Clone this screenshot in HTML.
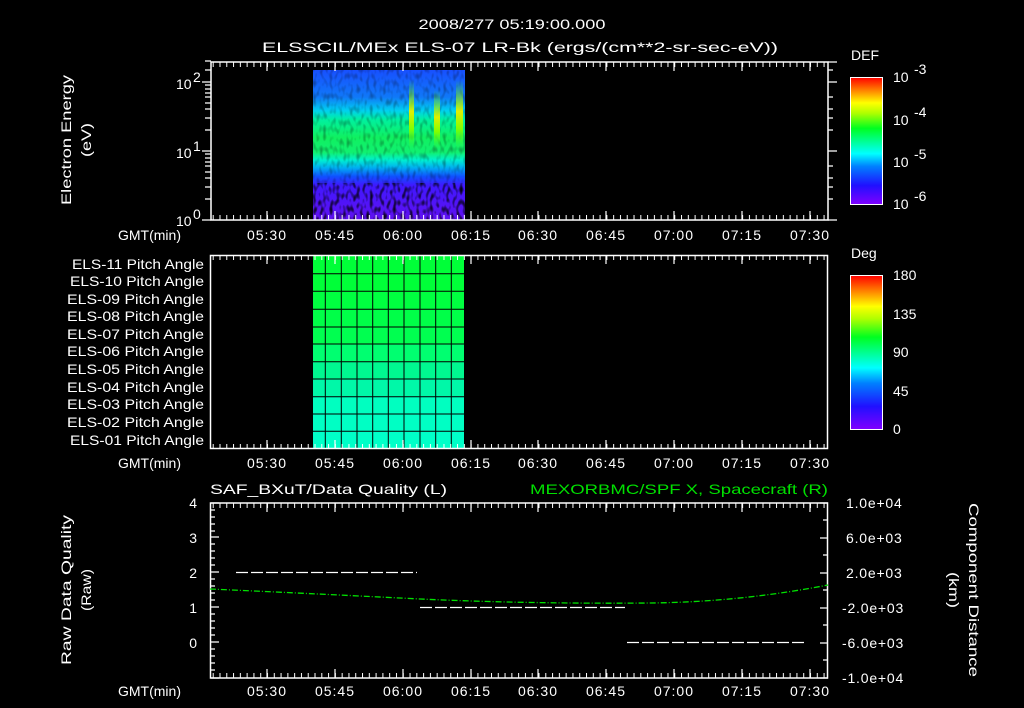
<!DOCTYPE html>
<html><head><meta charset="utf-8"><style>
html,body{margin:0;padding:0;background:#000;width:1024px;height:708px;overflow:hidden}
svg{display:block}
text{font-family:"Liberation Sans",sans-serif;fill:#fff;font-size:14px}
</style></head><body>
<svg width="1024" height="708" viewBox="0 0 1024 708">
<defs>
<linearGradient id="rb" x1="0" y1="1" x2="0" y2="0">
<stop offset="0" stop-color="#8000ff"/><stop offset="0.15" stop-color="#2010ff"/>
<stop offset="0.3" stop-color="#0080ff"/><stop offset="0.4" stop-color="#00ffff"/>
<stop offset="0.6" stop-color="#00ff20"/><stop offset="0.72" stop-color="#b0ff00"/>
<stop offset="0.8" stop-color="#ffff00"/><stop offset="0.9" stop-color="#ff8000"/>
<stop offset="1" stop-color="#ff0000"/></linearGradient>
<linearGradient id="sp" x1="0" y1="0" x2="0" y2="1">
<stop offset="0" stop-color="#1850ff"/><stop offset="0.18" stop-color="#1078f8"/>
<stop offset="0.27" stop-color="#00d0f0"/><stop offset="0.33" stop-color="#00f0a0"/>
<stop offset="0.45" stop-color="#10f060"/><stop offset="0.55" stop-color="#10f070"/>
<stop offset="0.6" stop-color="#00f0d0"/><stop offset="0.65" stop-color="#00b0f0"/>
<stop offset="0.71" stop-color="#1050ff"/><stop offset="0.77" stop-color="#4018ff"/>
<stop offset="1" stop-color="#6010f0"/></linearGradient>
<filter id="nz" x="0" y="0" width="1" height="1"><feTurbulence type="fractalNoise" baseFrequency="0.3 0.15" numOctaves="1" seed="3"/><feColorMatrix type="matrix" values="0 0 0 0 0  0 0 0 0 0  0 0 0 0 0  0 0 0 -3 1.6"/><feComposite in2="SourceGraphic" operator="in"/></filter>
<pattern id="tk" patternUnits="userSpaceOnUse" x="267" y="0" width="6.7875" height="708"><line x1="0.5" y1="0" x2="0.5" y2="708" stroke="#fff"/></pattern>
<linearGradient id="sk" x1="0" y1="0" x2="0" y2="1"><stop offset="0" stop-color="#40ff00" stop-opacity="0"/><stop offset="0.45" stop-color="#e0f000"/><stop offset="0.7" stop-color="#80ff00"/><stop offset="1" stop-color="#20ff40" stop-opacity="0"/></linearGradient>
</defs>

<text x="512" y="29" text-anchor="middle" font-size="16" textLength="187" lengthAdjust="spacingAndGlyphs">2008/277 05:19:00.000</text>
<text x="262" y="52" font-size="16" textLength="516" lengthAdjust="spacingAndGlyphs">ELSSCIL/MEx ELS-07 LR-Bk  (ergs/(cm**2-sr-sec-eV))</text>

<!-- Panel 1 -->
<rect x="313" y="70" width="152" height="150" fill="url(#sp)"/>
<rect x="313" y="70" width="152" height="150" fill="#000" filter="url(#nz)" opacity="0.3"/>
<rect x="313" y="183" width="152" height="37" fill="#000" filter="url(#nz)" opacity="0.85"/>
<rect x="409" y="80" width="5" height="70" fill="url(#sk)"/>
<rect x="434" y="90" width="6" height="60" fill="url(#sk)"/>
<rect x="456" y="80" width="7" height="70" fill="url(#sk)"/>
<rect x="211" y="62" width="617" height="158" fill="none" stroke="#fff" stroke-width="1.5"/>
<rect x="211" y="62" width="617" height="5" fill="url(#tk)"/>
<rect x="211" y="215" width="617" height="5" fill="url(#tk)"/>
<g stroke="#fff" stroke-width="1.2">
<path d="M267 62v9M335 62v9M403 62v9M471 62v9M538 62v9M606 62v9M674 62v9M742 62v9M810 62v9"/>
<path d="M267 220v-9M335 220v-9M403 220v-9M471 220v-9M538 220v-9M606 220v-9M674 220v-9M742 220v-9M810 220v-9"/>
<path d="M202 82h9M202 151h9M202 220h9M205 199h6M205 187h6M205 178h6M205 172h6M205 166h6M205 162h6M205 158h6M205 154h6M205 130h6M205 118h6M205 109h6M205 103h6M205 97h6M205 93h6M205 89h6M205 85h6M205 61h6M205 70h6"/>
<path d="M837 82h-9M837 151h-9M837 220h-9M833 199h-5M833 187h-5M833 178h-5M833 166h-5M833 130h-5M833 118h-5M833 109h-5M833 97h-5M833 70h-5M837 62h-9"/>
</g>
<text x="176" y="89">10</text><text x="193" y="82" font-size="10">2</text>
<text x="176" y="158">10</text><text x="193" y="151" font-size="10">1</text>
<text x="176" y="226">10</text><text x="193" y="219" font-size="10">0</text>
<g transform="translate(71,140) rotate(-90)"><text text-anchor="middle" font-size="15" textLength="130" lengthAdjust="spacingAndGlyphs">Electron Energy</text></g>
<g transform="translate(91,140) rotate(-90)"><text text-anchor="middle" font-size="15" textLength="34" lengthAdjust="spacingAndGlyphs">(eV)</text></g>
<text x="118" y="240" textLength="63" lengthAdjust="spacingAndGlyphs">GMT(min)</text>
<g text-anchor="middle" letter-spacing="1"><text x="267" y="240">05:30</text><text x="335" y="240">05:45</text><text x="403" y="240">06:00</text><text x="471" y="240">06:15</text><text x="538" y="240">06:30</text><text x="606" y="240">06:45</text><text x="674" y="240">07:00</text><text x="742" y="240">07:15</text><text x="810" y="240">07:30</text></g>
<text x="851" y="60" font-size="16">DEF</text>
<rect x="850.5" y="77.5" width="32" height="127" fill="url(#rb)" stroke="#fff"/>
<text x="893" y="82" font-size="17">10</text><text x="914" y="74" font-size="11">-3</text>
<text x="893" y="125" font-size="17">10</text><text x="914" y="117" font-size="11">-4</text>
<text x="893" y="167" font-size="17">10</text><text x="914" y="159" font-size="11">-5</text>
<text x="893" y="209" font-size="17">10</text><text x="914" y="201" font-size="11">-6</text>

<!-- Panel 2 -->
<g>
<rect x="313" y="255" width="151" height="18.7" fill="#00ff38"/>
<rect x="313" y="273.7" width="151" height="17.6" fill="#00ff38"/>
<rect x="313" y="291.3" width="151" height="18" fill="#00ff40"/>
<rect x="313" y="309.3" width="151" height="17.7" fill="#00ff48"/>
<rect x="313" y="327" width="151" height="17" fill="#00ff50"/>
<rect x="313" y="344" width="151" height="17.7" fill="#00ff70"/>
<rect x="313" y="361.7" width="151" height="17.3" fill="#00f890"/>
<rect x="313" y="379" width="151" height="17.7" fill="#00f8a8"/>
<rect x="313" y="396.7" width="151" height="17.3" fill="#00ffc0"/>
<rect x="313" y="414" width="151" height="17.3" fill="#00ffc4"/>
<rect x="313" y="431.3" width="151" height="17.4" fill="#00ffc8"/>
</g>
<g stroke="#000" stroke-width="1">
<path d="M325.3 255v194M341.3 255v194M357 255v194M372.7 255v194M388.3 255v194M404 255v194M420 255v194M435.7 255v194M451.3 255v194"/>
<path d="M313 273.7h151M313 291.3h151M313 309.3h151M313 327h151M313 344h151M313 361.7h151M313 379h151M313 396.7h151M313 414h151M313 431.3h151"/>
</g>
<rect x="210.5" y="255.5" width="617" height="193" fill="none" stroke="#fff" stroke-width="1.5"/>
<rect x="211" y="255" width="617" height="5" fill="url(#tk)"/>
<rect x="211" y="444" width="617" height="5" fill="url(#tk)"/>
<g stroke="#fff" stroke-width="1.2">
<path d="M267 255v9M335 255v9M403 255v9M471 255v9M538 255v9M606 255v9M674 255v9M742 255v9M810 255v9"/>
<path d="M267 449v-9M335 449v-9M403 449v-9M471 449v-9M538 449v-9M606 449v-9M674 449v-9M742 449v-9M810 449v-9"/>
</g>
<g font-size="13">
<text x="72" y="269" textLength="132" lengthAdjust="spacingAndGlyphs">ELS-11 Pitch Angle</text>
<text x="70" y="286" textLength="134" lengthAdjust="spacingAndGlyphs">ELS-10 Pitch Angle</text>
<text x="67" y="304" textLength="137" lengthAdjust="spacingAndGlyphs">ELS-09 Pitch Angle</text>
<text x="67" y="321" textLength="137" lengthAdjust="spacingAndGlyphs">ELS-08 Pitch Angle</text>
<text x="67" y="339" textLength="137" lengthAdjust="spacingAndGlyphs">ELS-07 Pitch Angle</text>
<text x="67" y="356" textLength="137" lengthAdjust="spacingAndGlyphs">ELS-06 Pitch Angle</text>
<text x="67" y="374" textLength="137" lengthAdjust="spacingAndGlyphs">ELS-05 Pitch Angle</text>
<text x="67" y="392" textLength="137" lengthAdjust="spacingAndGlyphs">ELS-04 Pitch Angle</text>
<text x="67" y="409" textLength="137" lengthAdjust="spacingAndGlyphs">ELS-03 Pitch Angle</text>
<text x="67" y="427" textLength="137" lengthAdjust="spacingAndGlyphs">ELS-02 Pitch Angle</text>
<text x="70" y="445" textLength="134" lengthAdjust="spacingAndGlyphs">ELS-01 Pitch Angle</text>
</g>
<text x="118" y="468" textLength="63" lengthAdjust="spacingAndGlyphs">GMT(min)</text>
<g text-anchor="middle" letter-spacing="1"><text x="267" y="468">05:30</text><text x="335" y="468">05:45</text><text x="403" y="468">06:00</text><text x="471" y="468">06:15</text><text x="538" y="468">06:30</text><text x="606" y="468">06:45</text><text x="674" y="468">07:00</text><text x="742" y="468">07:15</text><text x="810" y="468">07:30</text></g>
<text x="851" y="258" font-size="16">Deg</text>
<rect x="850.5" y="275.5" width="32" height="154" fill="url(#rb)" stroke="#fff"/>
<g font-size="17"><text x="893" y="280">180</text><text x="893" y="319">135</text><text x="893" y="357">90</text><text x="893" y="396">45</text><text x="893" y="434">0</text></g>

<!-- Panel 3 -->
<text x="210" y="494" font-size="15" textLength="237" lengthAdjust="spacingAndGlyphs">SAF_BXuT/Data Quality (L)</text>
<text x="530" y="494" font-size="15" textLength="298" lengthAdjust="spacingAndGlyphs" style="fill:#00e000">MEXORBMC/SPF X, Spacecraft (R)</text>
<rect x="210.5" y="503" width="617" height="175" fill="none" stroke="#fff" stroke-width="1.5"/>
<rect x="211" y="503" width="617" height="5" fill="url(#tk)"/>
<rect x="211" y="673" width="617" height="5" fill="url(#tk)"/>
<g stroke="#fff" stroke-width="1.2">
<path d="M267 503v9M335 503v9M403 503v9M471 503v9M538 503v9M606 503v9M674 503v9M742 503v9M810 503v9"/>
<path d="M267 678v-9M335 678v-9M403 678v-9M471 678v-9M538 678v-9M606 678v-9M674 678v-9M742 678v-9M810 678v-9"/>
<path d="M211 503h8M211 537h8M211 572h8M211 607h8M211 642h8M211 678h8"/>
<path d="M211 510h4M211 517h4M211 524h4M211 531h4M211 544h4M211 551h4M211 558h4M211 565h4M211 579h4M211 586h4M211 593h4M211 600h4M211 614h4M211 621h4M211 628h4M211 635h4M211 649h4M211 656h4M211 663h4M211 670h4"/>
<path d="M828 503h-8M828 520h-5M828 538h-8M828 555h-5M828 573h-8M828 590h-5M828 608h-8M828 625h-5M828 643h-8M828 660h-5M828 678h-8"/>
</g>
<g font-size="14" text-anchor="end"><text x="197" y="508">4</text><text x="197" y="543">3</text><text x="197" y="578">2</text><text x="197" y="613">1</text><text x="197" y="648">0</text></g>
<g font-size="12" letter-spacing="0.8"><text x="846" y="508">1.0e+04</text><text x="846" y="543">6.0e+03</text><text x="846" y="578">2.0e+03</text><text x="842" y="613">-2.0e+03</text><text x="842" y="648">-6.0e+03</text><text x="842" y="683">-1.0e+04</text></g>
<g stroke="#fff" stroke-width="1.3" stroke-dasharray="12,3">
<path d="M236 572.5H417M420 607.5H625M627 642.5H805"/>
</g>
<path d="M210 589 Q 300 593 420 599 Q 530 604 650 603 Q 740 602 828 585" fill="none" stroke="#00e000" stroke-width="1.3" stroke-dasharray="6,2,1,2"/>
<g transform="translate(71,590) rotate(-90)"><text text-anchor="middle" font-size="15" textLength="150" lengthAdjust="spacingAndGlyphs">Raw Data Quality</text></g>
<g transform="translate(91,590) rotate(-90)"><text text-anchor="middle" font-size="15" textLength="42" lengthAdjust="spacingAndGlyphs">(Raw)</text></g>
<g transform="translate(969,590) rotate(90)"><text text-anchor="middle" font-size="15" textLength="174" lengthAdjust="spacingAndGlyphs">Component Distance</text></g>
<g transform="translate(949,590) rotate(90)"><text text-anchor="middle" font-size="15" textLength="36" lengthAdjust="spacingAndGlyphs">(km)</text></g>
<text x="118" y="696" textLength="63" lengthAdjust="spacingAndGlyphs">GMT(min)</text>
<g text-anchor="middle" letter-spacing="1"><text x="267" y="696">05:30</text><text x="335" y="696">05:45</text><text x="403" y="696">06:00</text><text x="471" y="696">06:15</text><text x="538" y="696">06:30</text><text x="606" y="696">06:45</text><text x="674" y="696">07:00</text><text x="742" y="696">07:15</text><text x="810" y="696">07:30</text></g>
</svg>
</body></html>
